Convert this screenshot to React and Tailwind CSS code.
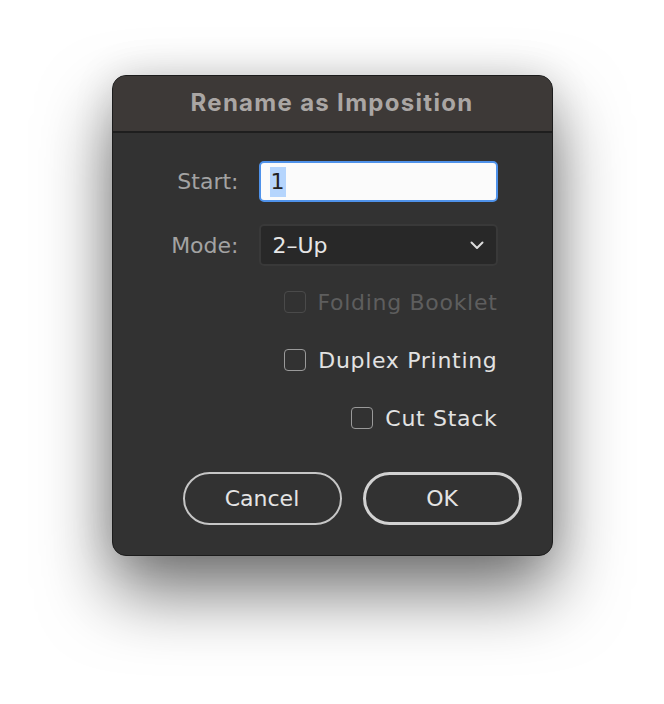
import React from 'react';

const Checkbox = ({ label, disabled }) => (
  <label className={`h-[30px] flex items-center gap-[12px] ${disabled ? 'text-[#5e5e5e]' : 'text-[#e2e2e2]'}`}>
    <span
      className={`w-[22px] h-[22px] rounded-[4px] border-[1.5px] ${
        disabled ? 'border-[#4a4a4a]' : 'border-[#9a9a9a]'
      }`}
    />
    <span className="tracking-[0.7px]">{label}</span>
  </label>
);

export default function App() {
  return (
    <div
      className="min-h-[704px] bg-white flex justify-center pt-[75px]"
      style={{ fontFamily: '"DejaVu Sans", "Open Sans", sans-serif' }}
    >
      <div className="w-[441px] h-[481px] rounded-[14px] bg-[#323232] border border-[#1c1c1c] overflow-hidden flex flex-col shadow-[0_36px_70px_rgba(0,0,0,0.55),0_0_40px_rgba(0,0,0,0.12)]">
        {/* title bar */}
        <div className="h-[57px] shrink-0 bg-[#3d3937] border-b-2 border-[#1e1e1e] flex items-center justify-center pb-[1px]">
          <h1
            className="text-[24px] font-bold text-[#aaa6a4] tracking-[1.3px]"
            style={{ fontFamily: 'Inter, "Liberation Sans", sans-serif' }}
          >
            Rename as Imposition
          </h1>
        </div>

        <div className="flex-1 flex flex-col w-[386px] pt-[28px] text-[22px]">
          <div className="flex items-center gap-[20px]">
            <span className="w-[126px] text-right text-[#a3a3a3]">Start:</span>
            <div className="w-[239px] h-[41px] bg-[#fbfbfb] border-2 border-[#4f92ea] rounded-[5px] flex items-center pl-[9px]">
              <span className="bg-[#b5d5fd] text-[#222] leading-[30px] px-[1px]">1</span>
            </div>
          </div>

          <div className="flex items-center gap-[20px] mt-[22px]">
            <span className="w-[126px] text-right text-[#a3a3a3]">Mode:</span>
            <div className="w-[239px] h-[42px] bg-[#282828] border-2 border-[#393939] rounded-[5px] flex items-center justify-between pl-[12px] pr-[12px] text-[#e6e6e6]">
              <span>2–Up</span>
              <svg width="14" height="9" viewBox="0 0 14 9" fill="none">
                <path d="M1.5 1.5 L7 7 L12.5 1.5" stroke="#dcdcdc" strokeWidth="2" strokeLinecap="round" strokeLinejoin="round" />
              </svg>
            </div>
          </div>

          <div className="flex flex-col items-end gap-[28px] mt-[21px] mr-[1px]">
            <Checkbox label="Folding Booklet" disabled />
            <Checkbox label="Duplex Printing" />
            <Checkbox label="Cut Stack" />
          </div>
        </div>

        <div className="flex justify-end gap-[21px] pb-[30px] pr-[30px] text-[22px] text-[#e4e4e4]">
          <button className="w-[159px] h-[53px] rounded-full border-2 border-[#c6c6c6]">Cancel</button>
          <button className="w-[159px] h-[53px] rounded-full border-[3px] border-[#d2d2d2]">OK</button>
        </div>
      </div>
    </div>
  );
}
